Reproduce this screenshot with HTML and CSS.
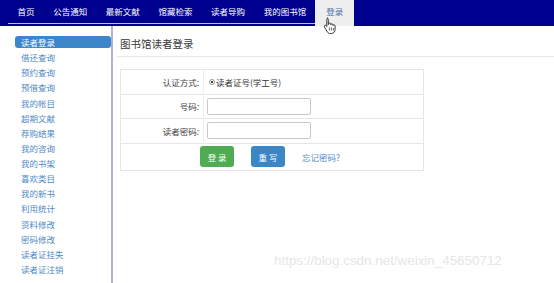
FILE: index.html
```html
<!doctype html>
<html lang="zh-CN">

<head>
    <meta charset="UTF-8">
    <title>图书馆读者登录</title>
    <link rel="stylesheet" href="styles.css">
</head>

<body>
    <div class="topbar">
        <ul class="nav">
            <li><a href="#">首页</a></li>
            <li><a href="#">公告通知</a></li>
            <li><a href="#">最新文献</a></li>
            <li><a href="#">馆藏检索</a></li>
            <li><a href="#">读者导购</a></li>
            <li><a href="#">我的图书馆</a></li>
            <li class="active"><a href="#">登录</a></li>
        </ul>
    </div>

    <div class="wrap">
        <ul class="side">
            <li class="on"><a href="#">读者登录</a></li>
            <li><a href="#">借还查询</a></li>
            <li><a href="#">预约查询</a></li>
            <li><a href="#">预借查询</a></li>
            <li><a href="#">我的帐目</a></li>
            <li><a href="#">超期文献</a></li>
            <li><a href="#">荐购结果</a></li>
            <li><a href="#">我的咨询</a></li>
            <li><a href="#">我的书架</a></li>
            <li><a href="#">喜欢类目</a></li>
            <li><a href="#">我的新书</a></li>
            <li><a href="#">利用统计</a></li>
            <li><a href="#">资料修改</a></li>
            <li><a href="#">密码修改</a></li>
            <li><a href="#">读者证挂失</a></li>
            <li><a href="#">读者证注销</a></li>
        </ul>

        <div class="main">
            <h2 class="title">图书馆读者登录</h2>
            <table class="login">
                <tr>
                    <td class="lab">认证方式:</td>
                    <td><label class="radio"><span class="dot"></span>读者证号(学工号)</label></td>
                </tr>
                <tr>
                    <td class="lab">号码:</td>
                    <td><input type="text" class="ipt"></td>
                </tr>
                <tr>
                    <td class="lab">读者密码:</td>
                    <td><input type="password" class="ipt"></td>
                </tr>
                <tr>
                    <td colspan="2" class="btns">
                        <button class="btn green">登 录</button>
                        <button class="btn blue">重 写</button>
                        <a href="#" class="forget">忘记密码?</a>
                    </td>
                </tr>
            </table>
        </div>
    </div>

    <div class="mark">https://blog.csdn.net/weixin_45650712</div>

    <svg class="cursor" width="14" height="18" viewBox="0 0 14 18">
        <path d="M4 1.2c.8 0 1.3.5 1.3 1.3v5.2l.1-.9c.2-.6.7-.9 1.3-.8.6.1 1 .6 1 1.2v.6c.1-.6.6-1 1.2-1 .7 0 1.1.5 1.1 1.2v.5c.2-.5.6-.8 1.1-.7.6.1 1 .6 1 1.2v3.4c0 2.1-1.4 4.1-3.6 4.1H7.1c-1.2 0-2.1-.6-2.7-1.500L1.4 9.9c-.3-.6-.1-1.2.4-1.5.5-.3 1.1-.2 1.4.3l.6.8V2.5c0-.8.3-1.300.7-1.300z" fill="#fff" stroke="#222" stroke-width=".9" stroke-linejoin="round" />
        <path d="M6.4 10.5v3M8.4 10.5v3M10.4 10.8v2.7" stroke="#222" stroke-width=".7" />
    </svg>
</body>

</html>
```

FILE: styles.css
```css
* {
    box-sizing: border-box;
}

html,
body {
    height: 100%;
}

body {
    margin: 0;
    font-family: "Noto Sans CJK SC", "Liberation Sans", sans-serif;
    font-size: 8.5px;
    color: #333;
    background: #fff;
    display: flex;
    flex-direction: column;
    overflow: hidden;
    position: relative;
}

ul {
    list-style: none;
    margin: 0;
    padding: 0;
}

a {
    text-decoration: none;
}

/* top nav */
.topbar {
    height: 26px;
    background: #00008e;
    flex: none;
}

.nav {
    display: flex;
    width: max-content;
    margin-left: 8px;
    height: 24px;
    border-bottom: 1px solid #b8bce6;
    white-space: nowrap;
}

.nav li {
    flex: none;
}

.nav li a {
    display: block;
    height: 23px;
    line-height: 23px;
    padding: 0 9px 0 9.6px;
    color: #fff;
}

.nav li.active a {
    height: 26px;
    padding: 0 11px;
    background: #eeeeee;
    color: #4f72a8;
}

/* layout */
.wrap {
    flex: 1;
    display: flex;
}

.side {
    width: 113px;
    padding: 10px 0 0 15px;
    border-right: 2px solid #aeb0de;
}

.side li a {
    display: block;
    height: 12px;
    line-height: 12px;
    margin-bottom: 3.13px;
    padding-left: 6px;
    border-radius: 3px;
    color: #4f8ac6;
    white-space: nowrap;
}

.side li.on a {
    background: #3c86c9;
    color: #fff;
}

.main {
    flex: 1;
    padding-top: 9px;
}

.title {
    margin: 0 0 12px 4px;
    padding: 0 0 3px 3px;
    font-size: 10.5px;
    font-weight: normal;
    line-height: 18px;
    color: #3a3a3a;
    border-bottom: 1px solid #e6e6e6;
}

/* login table */
.login {
    margin-left: 7px;
    width: 304px;
    border-collapse: collapse;
    border: 1px solid #e6e6e6;
}

.login td {
    border-top: 1px solid #e6e6e6;
    height: 24.5px;
    padding: 0;
    vertical-align: middle;
}

.login td.lab {
    width: 83px;
    text-align: right;
    padding-right: 4px;
    border-right: 1px solid #efefef;
    color: #444;
}

.radio {
    display: flex;
    align-items: center;
    padding-left: 5px;
    color: #333;
}

.dot {
    width: 6px;
    height: 6px;
    margin-right: 1px;
    border-radius: 50%;
    border: 1px solid #999;
    background: radial-gradient(#444 40%, #fff 45%);
}

.ipt {
    display: block;
    margin-left: 3px;
    width: 104px;
    height: 17px;
    border: 1px solid #c9c9c9;
    border-radius: 2px;
    padding: 0 4px;
    font-size: 8.5px;
}

.login td.btns {
    height: 27px;
    text-align: center;
    padding-right: 4px;
}

.btn {
    width: 34px;
    height: 21px;
    border: 0;
    border-radius: 3px;
    color: #fff;
    font-family: inherit;
    font-size: 8.5px;
    padding: 0;
    vertical-align: middle;
}

.btn + .btn {
    margin-left: 15px;
}

.green {
    background: #4fac52;
}

.blue {
    background: #3a86c6;
}

.forget {
    margin-left: 15px;
    color: #4f8ac6;
    vertical-align: middle;
}

/* overlay */
.mark {
    position: absolute;
    left: 274px;
    top: 253px;
    font-family: "Liberation Sans", sans-serif;
    font-size: 13.4px;
    color: #e6e6e6;
}

.cursor {
    position: absolute;
    left: 323px;
    top: 17px;
}
```
